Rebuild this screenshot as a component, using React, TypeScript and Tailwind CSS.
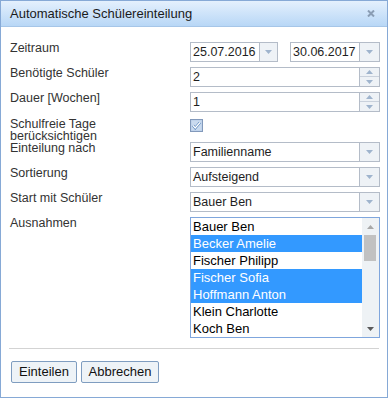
import React from "react";

const students = [
  { name: "Bauer Ben", selected: false },
  { name: "Becker Amelie", selected: true },
  { name: "Fischer Philipp", selected: false },
  { name: "Fischer Sofia", selected: true },
  { name: "Hoffmann Anton", selected: true },
  { name: "Klein Charlotte", selected: false },
  { name: "Koch Ben", selected: false },
];

function Tri({ up, color }: { up?: boolean; color: string }) {
  return (
    <svg width="7" height="4" viewBox="0 0 7 4">
      <polygon points={up ? "0,4 7,4 3.5,0" : "0,0 7,0 3.5,4"} fill={color} />
    </svg>
  );
}

function DropButton({ width = "w-[19px]" }: { width?: string }) {
  return (
    <div className={`${width} flex items-center justify-center border-l border-[#b4bcc8] bg-[#eef2f6]`}>
      <Tri color="#9fb4cd" />
    </div>
  );
}

function DateBox({ value, width, btn }: { value: string; width: string; btn: string }) {
  return (
    <div className={`${width} flex h-[20px] border border-[#b4bcc8] bg-white`}>
      <div className="flex-1 pl-[2px] text-[12.5px] leading-[18px] text-[#1e1e1e]">{value}</div>
      <DropButton width={btn} />
    </div>
  );
}

function Spinner({ value }: { value: string }) {
  return (
    <div className="flex h-[20px] w-[190px] border border-[#b4bcc8] bg-white">
      <div className="flex-1 pl-[2px] text-[12.5px] leading-[18px] text-[#1e1e1e]">{value}</div>
      <div className="flex w-[20px] flex-col border-l border-[#b4bcc8] bg-[#eef2f6]">
        <div className="flex h-[9px] items-center justify-center border-b border-[#c9d1dc]">
          <Tri up color="#9fb4cd" />
        </div>
        <div className="flex flex-1 items-center justify-center">
          <Tri color="#9fb4cd" />
        </div>
      </div>
    </div>
  );
}

function Select({ value }: { value: string }) {
  return (
    <div className="flex h-[20px] w-[190px] border border-[#b4bcc8] bg-white">
      <div className="flex-1 pl-[2px] text-[12.5px] leading-[18px] text-[#1e1e1e]">{value}</div>
      <DropButton width="w-[20px]" />
    </div>
  );
}

function Row({ label, children, tight }: { label: React.ReactNode; children: React.ReactNode; tight?: boolean }) {
  return (
    <div className="flex h-[25px]">
      <div
        className={`w-[180px] shrink-0 text-[12.5px] text-[#333] ${tight ? "leading-[12px] pt-[1px]" : "leading-[13px]"}`}
      >
        {label}
      </div>
      <div className="w-[190px]">{children}</div>
    </div>
  );
}

export default function App() {
  return (
    <div className="h-[398px] w-[388px] bg-white font-['Liberation_Sans',Arial,sans-serif]">
      <div className="flex h-full w-full flex-col border border-[#86a9d6]">
        <div className="flex h-[26px] items-center justify-between border-b border-[#a6c6e8] bg-linear-to-b from-[#e4f0fd] to-[#b8d7f6] pl-[9px] pr-[12px]">
          <span className="text-[13px] text-[#1b1b1b]">Automatische Schülereinteilung</span>
          <svg width="8" height="7" viewBox="0 0 8 7">
            <path d="M1 0.5 L7 6.5 M7 0.5 L1 6.5" stroke="#8a9db4" strokeWidth="2" />
          </svg>
        </div>

        <div className="flex flex-col pl-[9px] pt-[15px]">
          <Row label="Zeitraum">
            <div className="flex gap-[12px]">
              <DateBox value="25.07.2016" width="w-[88px]" btn="w-[18px]" />
              <DateBox value="30.06.2017" width="w-[90px]" btn="w-[20px]" />
            </div>
          </Row>
          <Row label="Benötigte Schüler">
            <Spinner value="2" />
          </Row>
          <Row label="Dauer [Wochen]">
            <Spinner value="1" />
          </Row>
          <Row
            label={
              <>
                Schulfreie Tage
                <br />
                berücksichtigen
              </>
            }
            tight
          >
            <div className="mt-[2px] h-[13px] w-[13px]">
              <svg width="13" height="13" viewBox="0 0 13 13">
                <rect x="0.5" y="0.5" width="12" height="12" fill="#b7cce6" stroke="#8299bb" />
                <rect x="1.5" y="1.5" width="10" height="10" fill="#c9daef" />
                <path d="M3 6.5 L5.2 9 L10 3.5" fill="none" stroke="#4f7fb8" strokeWidth="2.6" />
                <path d="M3 6.5 L5.2 9 L10 3.5" fill="none" stroke="#ffffff" strokeWidth="1.3" />
              </svg>
            </div>
          </Row>
          <Row label="Einteilung nach">
            <Select value="Familienname" />
          </Row>
          <Row label="Sortierung">
            <Select value="Aufsteigend" />
          </Row>
          <Row label="Start mit Schüler">
            <Select value="Bauer Ben" />
          </Row>
          <div className="flex">
            <div className="w-[180px] shrink-0 text-[12.5px] leading-[13px] text-[#333]">Ausnahmen</div>
            <div className="flex h-[121px] w-[190px] border border-[#7fa6dd] bg-white">
              <div className="flex w-[171px] flex-col">
                {students.map((s) => (
                  <div
                    key={s.name}
                    className={`h-[17px] pl-[2px] text-[13px] leading-[17px] ${
                      s.selected ? "bg-[#3399ff] text-white" : "text-black"
                    }`}
                  >
                    {s.name}
                  </div>
                ))}
              </div>
              <div className="flex w-[17px] flex-col bg-[#eef2f5]">
                <div className="flex h-[17px] items-center justify-center">
                  <Tri up color="#a8a8a8" />
                </div>
                <div className="ml-[2px] h-[26px] w-[12px] bg-[#c1c1c1]" />
                <div className="flex-1" />
                <div className="flex h-[17px] items-center justify-center">
                  <Tri color="#5a5a5a" />
                </div>
              </div>
            </div>
          </div>
        </div>

        <div className="mx-[8px] mt-[10px] h-px bg-[#d3d3d3]" />

        <div className="flex gap-[4px] pl-[10px] pt-[12px]">
          <button
            type="button"
            className="h-[22px] w-[66px] rounded-[2px] border border-[#7f9dc0] bg-[#eef3f7] text-[13px] text-[#111]"
          >
            Einteilen
          </button>
          <button
            type="button"
            className="h-[22px] w-[78px] rounded-[2px] border border-[#7f9dc0] bg-[#eef3f7] text-[13px] text-[#111]"
          >
            Abbrechen
          </button>
        </div>
      </div>
    </div>
  );
}
